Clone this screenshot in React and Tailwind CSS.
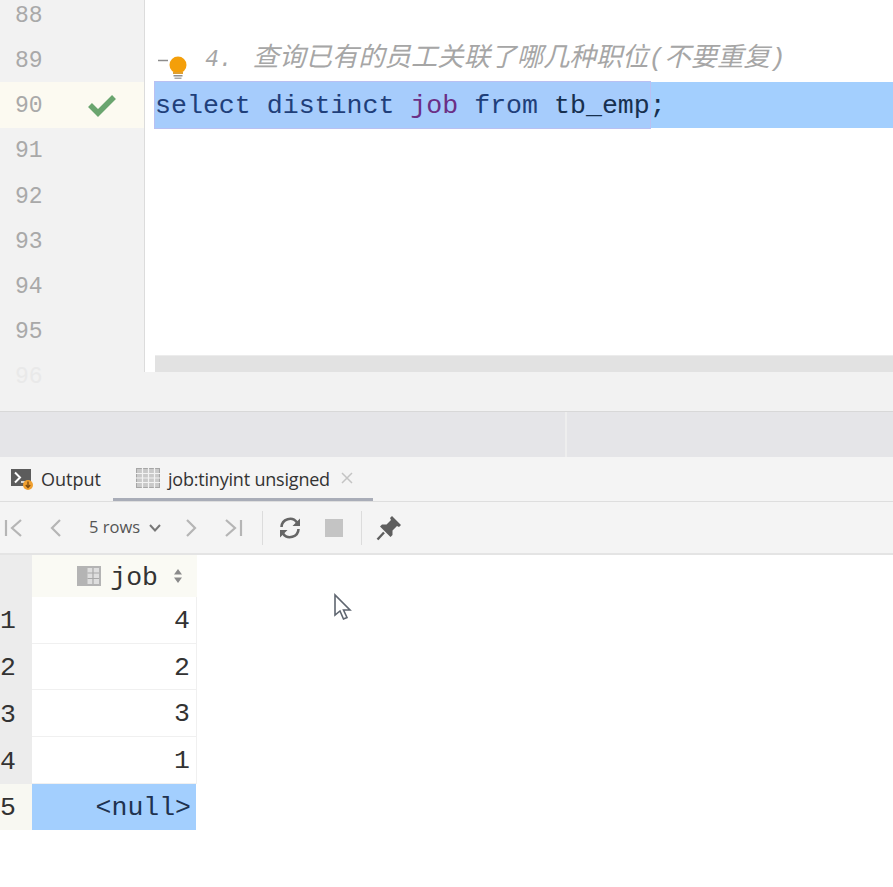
import React from "react";

const mono = "font-['Liberation_Mono','Noto_Sans_CJK_SC',monospace]";

const lineNumbers = [88, 89, 90, 91, 92, 93, 94, 95];
const rows = ["4", "2", "3", "1"];

const GutterRow = ({ n }) => (
  <div
    className={`h-[45.2px] flex items-center pl-[15px] text-[23px] text-[#a9a9a9] ${
      n === 90 ? "bg-[#fcfaf1]" : ""
    }`}
  >
    <span className="w-[73px] pt-[3px]">{n}</span>
    {n === 90 && (
      <svg width="28" height="24" viewBox="0 0 28 24">
        <path d="M2 12 L10 20 L26 4" fill="none" stroke="#6aa56f" strokeWidth="5.5" />
      </svg>
    )}
  </div>
);

const Bulb = () => (
  <svg
    className="absolute left-[158px] top-[54px]"
    width="32"
    height="28"
    viewBox="0 0 32 28"
  >
    <path d="M0 6.5 H10" stroke="#8c8c8c" strokeWidth="1.5" />
    <circle cx="20" cy="11" r="8.5" fill="#f49f0a" />
    <rect x="15" y="18" width="10" height="2" fill="#e0a030" />
    <rect x="15.5" y="21" width="9" height="1.5" fill="#8f8f8f" />
    <rect x="16.5" y="23.5" width="7" height="1.5" fill="#a8a8a8" />
  </svg>
);

const Editor = () => (
  <div className={`relative flex h-[372px] bg-white ${mono}`}>
    <div className="w-[145px] shrink-0 -mt-[8px] bg-[#f2f2f2] border-r border-[#dcdcdc]">
      {lineNumbers.map((n) => (
        <GutterRow key={n} n={n} />
      ))}
      <div className="h-[45.2px] flex items-center pl-[15px] pt-[3px] text-[23px] text-[#e9e9e9]">96</div>
    </div>
    <div className="flex-1 min-w-0 -mt-[8px] flex flex-col">
      <div className="h-[45.2px]" />
      <div className="h-[45.2px] flex items-center pl-[60px] pt-[1px] italic text-[#a6a6a6] whitespace-nowrap">
        <span className="mr-[20px] text-[23px]">4.</span>
        <span className="text-[26.4px]">查询已有的员工关联了哪几种职位(不要重复)</span>
      </div>
      <div className="h-[45.2px] ml-[10px] bg-[#a3cffe] flex items-center text-[26.6px] text-[#1f3f7a] whitespace-pre">
        <span className="bg-[#a6ccfc] outline outline-[#b9c0f2] h-full flex items-center pt-[4px]">
          <span>select distinct </span>
          <span className="text-[#6b2f86]">job</span>
          <span> from </span>
          <span className="text-[#17304f]">tb_emp</span>
        </span>
        <span className="text-[#17304f] pt-[4px]">;</span>
      </div>
      <div className="flex-1" />
      <div className="ml-[10px] h-[17px] bg-[#e2e2e2] border-t border-[#ececec]" />
    </div>
    <Bulb />
  </div>
);

const OutputIcon = () => (
  <svg width="24" height="24" viewBox="0 0 24 24" className="shrink-0">
    <rect x="1" y="2" width="20" height="17" fill="#5c5c5c" />
    <path d="M5 5.5 L10 10.5 L5 15.5" fill="none" stroke="#fff" strokeWidth="2" />
    <path d="M11 15 H15" stroke="#fff" strokeWidth="1.5" />
    <circle cx="18" cy="18" r="5" fill="#f0a030" />
    <path d="M18 14.5 V20 M15.8 18 L18 20.5 L20.2 18" fill="none" stroke="#7a4a10" strokeWidth="1.3" />
  </svg>
);

const GridIcon = () => (
  <svg width="24" height="20" viewBox="0 0 24 20" className="shrink-0">
    <rect x="0.5" y="0.5" width="23" height="19" fill="#c9c9c9" stroke="#a6a6a6" />
    <path
      d="M0 5.5 H24 M0 10 H24 M0 14.5 H24 M6.5 0 V20 M12.5 0 V20 M18.5 0 V20"
      stroke="#f2f2f2"
      strokeWidth="1.2"
    />
  </svg>
);

const Tabs = () => (
  <div className="h-[45px] flex bg-[#f4f4f4] border-b border-[#dedede] font-['Open_Sans',sans-serif] text-[18px] text-[#333333]">
    <div className="w-[113px] flex items-center gap-[7px] pl-[10px]">
      <OutputIcon />
      <span className="pt-[1px]">Output</span>
    </div>
    <div className="w-[260px] flex items-center pl-[23px] gap-[8px] border-b-[3px] border-[#a9adb8] whitespace-nowrap">
      <GridIcon />
      <span className="tracking-[-0.2px] pt-[3px]">job:tinyint unsigned</span>
      <svg width="12" height="12" viewBox="0 0 12 12" className="ml-[3px]">
        <path d="M1 1 L11 11 M11 1 L1 11" stroke="#c4c4c4" strokeWidth="1.5" />
      </svg>
    </div>
  </div>
);

const Chevron = ({ d, w = 18 }) => (
  <svg width={w} height="18" viewBox={`0 0 ${w} 18`} className="shrink-0">
    <path d={d} fill="none" stroke="#b5b5b5" strokeWidth="2.2" />
  </svg>
);

const Toolbar = () => (
  <div className="h-[53px] flex items-center bg-[#f4f4f4] border-b-2 border-[#e4e4e4] font-['Open_Sans',sans-serif]">
    <div className="ml-[4px]">
      <Chevron d="M2 1 V17 M17 1 L8 9 L17 17" />
    </div>
    <div className="ml-[28px]">
      <Chevron w={12} d="M10 1 L2 9 L10 17" />
    </div>
    <div className="ml-[27px] w-[88px] flex items-center text-[16.5px] text-[#555555]">
      <span>5 rows</span>
      <svg width="14" height="10" viewBox="0 0 14 10" className="ml-[8px]">
        <path d="M2 2 L7 7.5 L12 2" fill="none" stroke="#777777" strokeWidth="2" />
      </svg>
    </div>
    <div className="ml-[8px]">
      <Chevron w={12} d="M2 1 L10 9 L2 17" />
    </div>
    <div className="ml-[28px]">
      <Chevron d="M1 1 L10 9 L1 17 M16 1 V17" />
    </div>
    <div className="ml-[19px] w-px h-[34px] bg-[#dcdcdc]" />
    <svg width="24" height="24" viewBox="0 0 24 24" className="ml-[15px] shrink-0">
      <path
        d="M3.5 11 A8.5 8.5 0 0 1 19 6.5 M20.5 13 A8.5 8.5 0 0 1 5 17.5"
        fill="none"
        stroke="#666666"
        strokeWidth="2.6"
      />
      <path d="M22 2.5 V10 H14.5 Z M2 21.5 V14 H9.5 Z" fill="#666666" />
    </svg>
    <div className="ml-[23px] w-[18px] h-[18px] bg-[#c4c4c4]" />
    <div className="ml-[18px] w-px h-[34px] bg-[#dcdcdc]" />
    <svg width="26" height="26" viewBox="0 0 26 26" className="ml-[14px] shrink-0">
      <path d="M16 1 L25 10 L23 12 L21 11 L16.5 15.5 L16.5 20 L14.5 22 L4 11.5 L6 9.5 L10.5 9.5 L15 5 L14 3 Z" fill="#5e5e5e" />
      <path d="M8 17.5 L1.5 24.5" stroke="#5e5e5e" strokeWidth="2.4" />
    </svg>
  </div>
);

const Cursor = () => (
  <svg
    className="absolute left-[333px] top-[593px]"
    width="20"
    height="30"
    viewBox="0 0 20 30"
  >
    <path
      d="M2 2 V22 L7 18 L10.5 26 L14 24.5 L10.5 17 H17 Z"
      fill="#fff"
      stroke="#5f6670"
      strokeWidth="1.6"
    />
  </svg>
);

const ResultTable = () => (
  <div className={`flex-1 bg-white ${mono} text-[#333333] text-[26.5px]`}>
    <div className="flex h-[42px]">
      <div className="w-[32px] bg-[#ececec]" />
      <div className="w-[165px] bg-[#fafaf4] flex items-center justify-end pr-[14px]">
        <svg width="24" height="20" viewBox="0 0 24 20" className="mr-[9px]">
          <rect width="24" height="20" fill="#b4b4b4" />
          <path d="M10.5 2 H22 V18 H10.5 Z" fill="#dedede" />
          <path d="M10.5 7 H22 M10.5 12.5 H22 M16 2 V18" stroke="#a8a8a8" strokeWidth="1.2" />
        </svg>
        <span className="mr-[15px] pt-[6px]">job</span>
        <svg width="10" height="16" viewBox="0 0 10 16">
          <path d="M5 1 L9 6.5 H1 Z M5 15 L9 9.5 H1 Z" fill="#8a8a8a" />
        </svg>
      </div>
    </div>
    {rows.map((value, i) => (
      <div key={i} className="flex h-[46.7px]">
        <div className="w-[32px] bg-[#ececec] flex items-center pt-[4px]">{i + 1}</div>
        <div className="w-[165px] border-b border-[#f0f0f0] border-r flex items-center justify-end pr-[6px] pt-[4px]">
          {value}
        </div>
      </div>
    ))}
    <div className="flex h-[46px]">
      <div className="w-[32px] bg-[#f8f8f2] flex items-center pt-[4px]">5</div>
      <div className="w-[164px] bg-[#a3cffe] flex items-center justify-end pr-[5px] pt-[4px] text-[#1f3350]">
        {"<null>"}
      </div>
    </div>
  </div>
);

export default function App() {
  return (
    <div className="relative w-[893px] h-[887px] overflow-hidden flex flex-col bg-white">
      <Editor />
      <div className="h-[40px] bg-[#f2f2f2] border-b border-[#d8d8d8]" />
      <div className="h-[45px] flex bg-[#e5e5e8]">
        <div className="w-[567px] border-r-2 border-[#eeeeee]" />
      </div>
      <Tabs />
      <Toolbar />
      <ResultTable />
      <Cursor />
    </div>
  );
}
